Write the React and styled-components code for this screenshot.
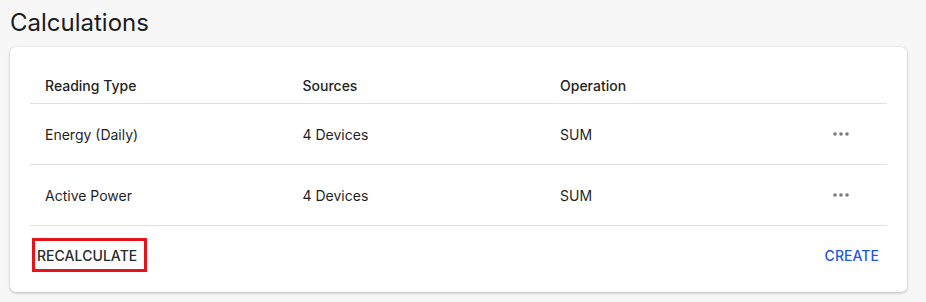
import styled, { createGlobalStyle } from "styled-components";

const GlobalStyle = createGlobalStyle`
  body {
    margin: 0;
    background: #f7f7f7;
    font-family: Inter, "Noto Sans", sans-serif;
    color: #1f1f1f;
  }
`;

const rows = [
  { type: "Energy (Daily)", sources: "4 Devices", op: "SUM" },
  { type: "Active Power", sources: "4 Devices", op: "SUM" },
];

const MoreIcon = () => (
  <svg width="16" height="4" viewBox="0 0 16 4">
    <circle cx="2" cy="2" r="1.8" fill="#7a7a7a" />
    <circle cx="8" cy="2" r="1.8" fill="#7a7a7a" />
    <circle cx="14" cy="2" r="1.8" fill="#7a7a7a" />
  </svg>
);

const App = () => {
  return (
    <Page>
      <GlobalStyle />
      <Title>Calculations</Title>
      <Card>
        <Table>
          <HeaderRow>
            <Cell>Reading Type</Cell>
            <Cell>Sources</Cell>
            <Cell>Operation</Cell>
            <Cell />
          </HeaderRow>
          {rows.map((r) => (
            <BodyRow key={r.type}>
              <Cell>{r.type}</Cell>
              <Cell>{r.sources}</Cell>
              <Cell>{r.op}</Cell>
              <ActionCell>
                <IconButton aria-label="More">
                  <MoreIcon />
                </IconButton>
              </ActionCell>
            </BodyRow>
          ))}
        </Table>
        <Footer>
          <TextButton $highlight>RECALCULATE</TextButton>
          <TextButton $primary>CREATE</TextButton>
        </Footer>
      </Card>
    </Page>
  );
};

export default App;

const Page = styled.div`
  padding: 8px 10px;
`;

const Title = styled.h1`
  margin: 0 0 9px;
  font-size: 24px;
  font-weight: 400;
  line-height: 30px;
  color: #1c1c1c;
`;

const Card = styled.div`
  width: 897px;
  box-sizing: border-box;
  background: #fff;
  border-radius: 6px;
  box-shadow: 0 1px 3px rgba(0, 0, 0, 0.25), 0 0 1px rgba(0, 0, 0, 0.08);
  padding: 20px 20px 20px;
`;

const Table = styled.div`
  display: flex;
  flex-direction: column;
`;

const Row = styled.div`
  display: grid;
  grid-template-columns: 257.5px 257.5px 257.5px 1fr;
  align-items: center;
  border-bottom: 1px solid #e0e0e0;
  font-size: 14px;
`;

const HeaderRow = styled(Row)`
  height: 36px;
  font-weight: 500;
`;

const BodyRow = styled(Row)`
  height: 60px;
`;

const Cell = styled.div`
  padding-left: 15px;
`;

const ActionCell = styled.div`
  display: flex;
  justify-content: flex-end;
  padding-right: 34px;
`;

const IconButton = styled.button`
  border: 0;
  background: none;
  padding: 4px;
  cursor: pointer;
  display: flex;
`;

const Footer = styled.div`
  display: flex;
  justify-content: space-between;
  align-items: center;
  padding-top: 12px;
`;

const TextButton = styled.button`
  border: ${(p) => (p.$highlight ? "3px solid #e3141b" : "3px solid transparent")};
  background: none;
  height: 34px;
  padding: 0 ${(p) => (p.$highlight ? "7px" : "5px")} 0 ${(p) => (p.$highlight ? "2px" : "6px")};
  margin-left: ${(p) => (p.$highlight ? "2px" : "0")};
  font-family: Inter, "Noto Sans", sans-serif;
  font-size: 14px;
  font-weight: 500;
  letter-spacing: 0.05px;
  color: ${(p) => (p.$primary ? "#1f57dc" : "#2a2a2a")};
  cursor: pointer;
`;
